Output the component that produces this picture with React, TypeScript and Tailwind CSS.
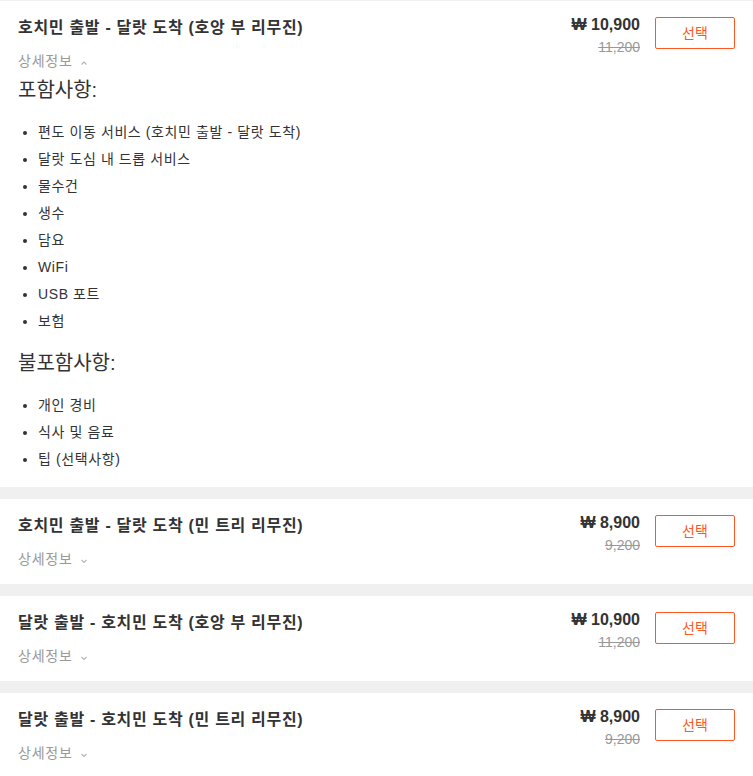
import React from 'react';

type Option = {
  title: string;
  price: string;
  original: string;
  open?: boolean;
};

const options: Option[] = [
  { title: '호치민 출발 - 달랏 도착 (호앙 부 리무진)', price: '10,900', original: '11,200', open: true },
  { title: '호치민 출발 - 달랏 도착 (민 트리 리무진)', price: '8,900', original: '9,200' },
  { title: '달랏 출발 - 호치민 도착 (호앙 부 리무진)', price: '10,900', original: '11,200' },
  { title: '달랏 출발 - 호치민 도착 (민 트리 리무진)', price: '8,900', original: '9,200' },
];

const included = [
  '편도 이동 서비스 (호치민 출발 - 달랏 도착)',
  '달랏 도심 내 드롭 서비스',
  '물수건',
  '생수',
  '담요',
  'WiFi',
  'USB 포트',
  '보험',
];

const excluded = ['개인 경비', '식사 및 음료', '팁 (선택사항)'];

const Chevron: React.FC<{ up?: boolean }> = ({ up }) => (
  <svg width="8" height="6" viewBox="0 0 8 6" className="ml-[7px] mt-[3px]">
    <path
      d={up ? 'M1.5 4.5 L4 2 L6.5 4.5' : 'M1.5 2 L4 4.5 L6.5 2'}
      fill="none"
      stroke="#b3b3b3"
      strokeWidth="1.1"
    />
  </svg>
);

const BulletList: React.FC<{ items: string[] }> = ({ items }) => (
  <ul className="list-disc pl-[20px] text-[14px] leading-[27px] tracking-[0.6px] text-[#333]">
    {items.map((item) => (
      <li key={item} className="marker:text-[#333]">
        {item}
      </li>
    ))}
  </ul>
);

const OptionCard: React.FC<{ option: Option }> = ({ option }) => (
  <div className={`bg-white px-[18px] pt-[15px] ${option.open ? 'pb-[14px]' : 'h-[85px]'}`}>
    <div className="flex justify-between">
      <div>
        <h3 className="text-[16px] font-bold leading-[24px] tracking-[0.7px] text-[#333]">{option.title}</h3>
        <div className="mt-[11px] flex items-center text-[14px] leading-[20px] tracking-[0.8px] text-[#999]">
          상세정보
          <Chevron up={option.open} />
        </div>
      </div>
      <div className="flex items-start">
        <div className="-mt-[2px] flex flex-col items-end">
          <span className="text-[16px] font-bold leading-[22px] text-[#333]">₩ {option.price}</span>
          <span className="text-[14px] leading-[22px] text-[#999] line-through">{option.original}</span>
        </div>
        <button className="ml-[15px] mt-[1px] h-[32px] w-[80px] rounded-[2px] border border-[#ff5722] bg-white text-[14px] text-[#ff5722]">
          선택
        </button>
      </div>
    </div>

    {option.open && (
      <div>
        <h4 className="mt-[5px] text-[20px] leading-[28px] text-[#333]">포함사항:</h4>
        <div className="mt-[15px]">
          <BulletList items={included} />
        </div>
        <h4 className="mt-[14px] text-[20px] leading-[28px] text-[#333]">불포함사항:</h4>
        <div className="mt-[15px]">
          <BulletList items={excluded} />
        </div>
      </div>
    )}
  </div>
);

export default function App() {
  return (
    <div
      className="min-h-screen bg-[#f0f0f0] pt-[1px]"
      style={{ fontFamily: '"Liberation Sans", "Noto Sans CJK KR", sans-serif' }}
    >
      <div className="flex flex-col gap-[12px]">
        {options.map((o) => (
          <OptionCard key={o.title} option={o} />
        ))}
      </div>
    </div>
  );
}
